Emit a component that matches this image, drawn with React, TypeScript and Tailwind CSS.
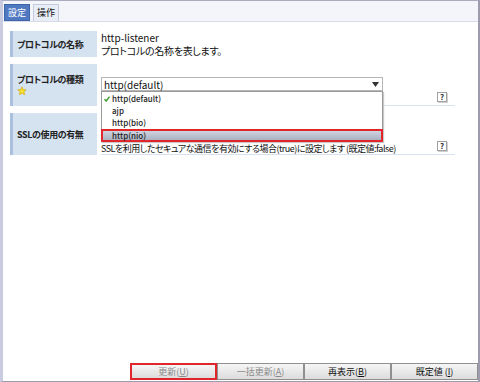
import React from "react"

const jp = "font-['Noto_Sans_CJK_JP','Noto_Sans',sans-serif] [font-feature-settings:'palt']"

function Help() {
  return (
    <div className="w-[10px] h-[10px] border border-[#a0a0a0] bg-white flex items-center justify-center text-[8px] font-bold leading-none text-[#333] shadow-[1px_1px_0_#d0d0d0]">
      ?
    </div>
  )
}

function Label({ children, star }: { children: React.ReactNode; star?: boolean }) {
  return (
    <div className="w-[87px] shrink-0 bg-[#d5e3f1] border-l-[3px] border-[#a9c1de] pl-[4px] flex flex-col justify-center">
      <div className="text-[9px] font-bold text-[#222] leading-[11px] tracking-[-0.4px]">{children}</div>
      {star && (
        <svg width="10" height="10" viewBox="0 0 24 24" className="mt-[1px]">
          <path
            d="M12 2l2.9 6.6 7.1.6-5.4 4.7 1.6 7-6.2-3.8-6.2 3.8 1.6-7L2 9.2l7.1-.6z"
            fill="#f7e034"
            stroke="#c9a400"
            strokeWidth="1.5"
          />
        </svg>
      )}
    </div>
  )
}

function Btn({ children, disabled, active }: { children: React.ReactNode; disabled?: boolean; active?: boolean }) {
  return (
    <div
      className={`w-[87px] h-[17px] flex items-center justify-center text-[9px] bg-gradient-to-b from-[#f6f6f6] to-[#dcdcdc] border ${
        active ? "border-[#e0262b] border-2" : "border-[#8f8f8f]"
      } ${disabled ? "text-[#8a8a8a]" : "text-[#111]"}`}
    >
      {children}
    </div>
  )
}

export default function App() {
  return (
    <div className={`w-[480px] h-[382px] bg-white flex flex-col border-l-[3px] border-l-[#c9cbe0] border-r-2 border-r-[#9c9cae] border-t border-t-[#a9abbe] border-b border-b-[#9c9cae] ${jp}`}>
      <div className="h-[21px] shrink-0 bg-[#f4f5fa] border-b border-[#d9dce8] flex items-end gap-[3px] pl-[1px]">
        <div className="h-[17px] px-[3px] bg-[#5079c2] border border-[#3d63a8] text-white text-[9px] flex items-center">設定</div>
        <div className="h-[17px] px-[3px] bg-[#e8edf6] border border-[#c5cbdc] border-b-0 text-[#111] text-[9px] flex items-center">操作</div>
      </div>

      <div className="flex-1 flex flex-col px-[7px] pt-[9px]">
        <div className="flex flex-col gap-[7px]">
          <div className="flex h-[26px] gap-[4px]">
            <Label>プロトコルの名称</Label>
            <div className="w-[354px] flex flex-col justify-center text-[10px] text-[#111]">
              <div className="leading-[13px]">http-listener</div>
              <div className="leading-[13px] tracking-[-0.3px]">プロトコルの名称を表します。</div>
            </div>
          </div>

          <div className="flex h-[42px] gap-[4px]">
            <Label star>プロトコルの種類</Label>
            <div className="w-[354px] flex flex-col border-b border-[#d7e2ee]">
              <div className="relative mt-[13px] w-[282px] h-[14px] border border-[#b5b5b5] bg-white flex items-center justify-between pl-[2px] pr-[3px] text-[10px] text-[#111]">
                <span>http(default)</span>
                <svg width="7" height="5" viewBox="0 0 7 5">
                  <path d="M0 0h7L3.5 5z" fill="#333" />
                </svg>
                <div className="absolute left-[-1px] top-[13px] w-[282px] h-[51px] bg-white border border-[#9a9a9a] z-10 flex flex-col text-[8px] text-[#222] pt-[1px] shadow-[1px_1px_1px_#c8c8c8]">
                  <div className="h-[12px] flex items-center pl-[2px] gap-[2px] font-medium">
                    <svg width="6" height="6" viewBox="0 0 6 6">
                      <path d="M0.5 3.2L2.2 5 5.5 0.8" fill="none" stroke="#3a9a2a" strokeWidth="1.4" />
                    </svg>
                    http(default)
                  </div>
                  <div className="h-[12px] flex items-center pl-[10px] font-medium">ajp</div>
                  <div className="h-[12px] flex items-center pl-[10px] font-medium">http(bio)</div>
                  <div className="h-[13px] flex items-center pl-[9px] font-medium bg-gradient-to-b from-[#cfd4de] to-[#a9b1c2] border-2 border-[#e0262b] -mx-[1px]">
                    http(nio)
                  </div>
                </div>
              </div>
              <div className="flex justify-end pr-[8px] mt-[1px]">
                <Help />
              </div>
            </div>
          </div>

          <div className="flex h-[42px] gap-[4px]">
            <Label>SSLの使用の有無</Label>
            <div className="w-[354px] flex items-end justify-between border-b border-[#d7e2ee] pr-[8px]">
              <div className="text-[9px] text-[#111] leading-[11px] tracking-[-0.5px] whitespace-nowrap">
                SSLを利用したセキュアな通信を有効にする場合(true)に設定します (既定値:false)
              </div>
              <div className="mb-[3px]">
                <Help />
              </div>
            </div>
          </div>
        </div>

        <div className="flex-1" />
      </div>

      <div className="flex justify-end pb-[1px]">
        <Btn disabled active>
          更新(<span className="underline">U</span>)
        </Btn>
        <Btn disabled>
          一括更新(<span className="underline">A</span>)
        </Btn>
        <Btn>
          再表示(<span className="underline">B</span>)
        </Btn>
        <Btn>
          既定値 (<span className="underline">I</span>)
        </Btn>
      </div>
    </div>
  )
}
